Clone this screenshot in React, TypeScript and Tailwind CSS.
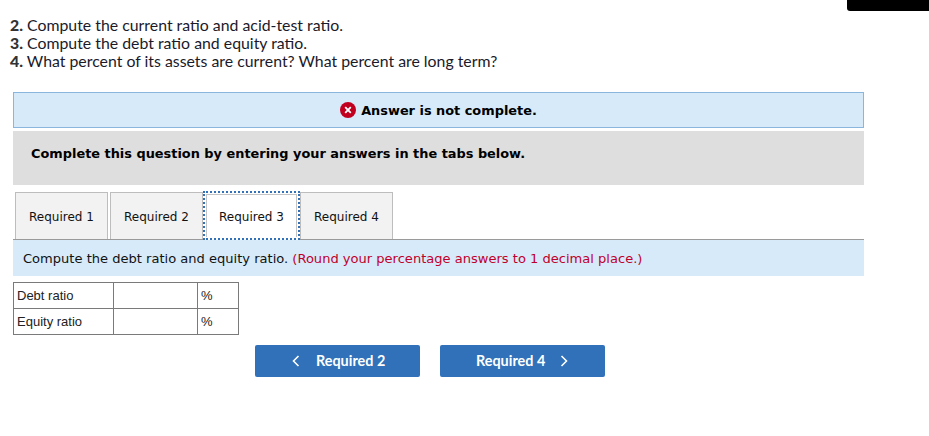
import React from "react";

const verdana = "font-['DejaVu_Sans',Verdana,sans-serif]";

function Tab({ label, active }: { label: string; active?: boolean }) {
  if (active) {
    return (
      <div className="w-[97px] h-[49px] -mb-px border-2 border-dotted border-[#3071b9] p-px bg-white">
        <div className="h-full border border-b-0 border-[#c4c4c4] bg-white flex items-center justify-center pt-[1px] text-[12px] text-[#111]">
          {label}
        </div>
      </div>
    );
  }
  return (
    <div className="w-[93px] h-[47px] border border-b-0 border-[#bdbdbd] bg-[#f2f2f2] flex items-center justify-center pt-[2px] text-[12px] text-[#111]">
      {label}
    </div>
  );
}

export default function App() {
  return (
    <div className="relative w-[929px] h-[436px] bg-white overflow-hidden">
      <div className="absolute right-0 top-0 w-[82px] h-[11px] bg-black rounded-bl-[3px]" />

      <div className="pt-[16px] pl-[10px] font-['Lato',sans-serif] text-[15.85px] leading-[18px] text-[#1a1a2a]">
        <p><b className="font-black text-[#333]">2.</b> Compute the current ratio and acid-test ratio.</p>
        <p><b className="font-black text-[#333]">3.</b> Compute the debt ratio and equity ratio.</p>
        <p><b className="font-black text-[#333]">4.</b> What percent of its assets are current? What percent are long term?</p>
      </div>

      <div className={`${verdana} ml-[13px] w-[851px]`}>
        <div className="mt-[22px] h-[36px] border border-[#8ab6de] bg-[#d6eafa] flex items-center justify-center gap-[5px] text-[12.9px] font-bold text-black">
          <svg width="16" height="16" viewBox="0 0 16 16" className="shrink-0">
            <circle cx="8" cy="8" r="8" fill="#c1001f" />
            <path d="M5.2 5.2 L10.8 10.8 M10.8 5.2 L5.2 10.8" stroke="#fff" strokeWidth="1.8" />
          </svg>
          <span className="pt-[1px]">Answer is not complete.</span>
        </div>

        <div className="mt-[3px] h-[54px] bg-[#dedede] flex items-center pl-[18px] pb-[9px] text-[12.9px] font-bold text-black">
          Complete this question by entering your answers in the tabs below.
        </div>

        <div className="mt-[5px] h-[49px] pl-[2px] flex items-end gap-[2px]">
          <Tab label="Required 1" />
          <Tab label="Required 2" />
          <div className="-mx-[2px] flex items-end">
            <Tab label="Required 3" active />
          </div>
          <Tab label="Required 4" />
        </div>

        <div className="h-[37px] border-t border-[#9a9a9a] bg-[#d6eafa] flex items-center pl-[10px] pt-[1px] text-[13.05px] text-[#111]">
          <span>Compute the debt ratio and equity ratio.&nbsp;</span>
          <span className="text-[#c0002a]">(Round your percentage answers to 1 decimal place.)</span>
        </div>
      </div>

      <table className="ml-[13px] mt-[6px] border-collapse font-['Liberation_Sans',Arial,sans-serif] text-[13px] text-[#222] w-[226px] table-fixed">
        <tbody>
          {["Debt ratio", "Equity ratio"].map((label) => (
            <tr key={label} className="h-[26px]">
              <td className="w-[100px] border border-[#7a7a7a] pl-[3px] py-0">{label}</td>
              <td className="w-[84px] border border-[#7a7a7a] p-0" />
              <td className="border border-[#7a7a7a] pl-[3px] py-0">%</td>
            </tr>
          ))}
        </tbody>
      </table>

      <div className="ml-[255px] mt-[10px] flex gap-[20px] font-['Lato',sans-serif] text-[14.4px] font-bold text-white">
        <button className="w-[165px] h-[32px] rounded-[2px] bg-[#3071b9] flex items-center pl-[37px] pb-[1px]">
          <svg width="8" height="12" viewBox="0 0 8 12" fill="none" stroke="#fff" strokeWidth="1.6" className="mr-[16px]">
            <path d="M6.5 1 L1.5 6 L6.5 11" />
          </svg>
          Required 2
        </button>
        <button className="w-[165px] h-[32px] rounded-[2px] bg-[#3071b9] flex items-center pl-[36px] pb-[1px]">
          Required 4
          <svg width="8" height="12" viewBox="0 0 8 12" fill="none" stroke="#fff" strokeWidth="1.6" className="ml-[15px]">
            <path d="M1.5 1 L6.5 6 L1.5 11" />
          </svg>
        </button>
      </div>
    </div>
  );
}
